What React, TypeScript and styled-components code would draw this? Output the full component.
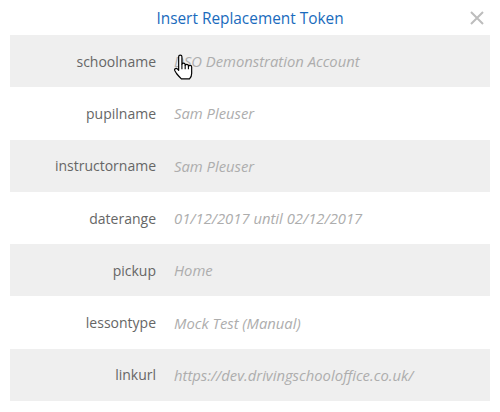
import React from "react";
import styled, { createGlobalStyle } from "styled-components";

const GlobalStyle = createGlobalStyle`
  html, body {
    margin: 0;
    padding: 0;
    background: #fff;
  }
  body {
    font-family: "Open Sans", "Liberation Sans", sans-serif;
  }
`;

const Dialog = styled.div`
  width: 500px;
  height: 412px;
  box-sizing: border-box;
  padding: 0 10px;
  background: #fff;
`;

const Header = styled.div`
  height: 35px;
  display: grid;
  grid-template-columns: 1fr auto 1fr;
  align-items: center;
`;

const Title = styled.h3`
  grid-column: 2;
  margin: 0;
  font-size: 15.4px;
  font-weight: 400;
  color: #1a6bbd;
  padding-top: 1px;
`;

const Close = styled.button`
  grid-column: 3;
  justify-self: end;
  margin-right: 6px;
  width: 14px;
  height: 14px;
  padding: 0;
  border: 0;
  background: none;
  cursor: pointer;
  display: flex;
`;

const Table = styled.div`
  display: flex;
  flex-direction: column;
`;

const Row = styled.div<{ $shaded: boolean }>`
  position: relative;
  height: 52.3px;
  display: grid;
  grid-template-columns: 146px 1fr;
  column-gap: 18px;
  align-items: center;
  background: ${(p) => (p.$shaded ? "#efefef" : "#fff")};
  font-size: 14px;
`;

const Label = styled.span`
  text-align: right;
  color: #666;
`;

const Value = styled.span`
  color: #adadad;
  font-style: italic;
  font-size: 14.8px;
`;

const Pointer = styled.svg`
  position: absolute;
  left: 163px;
  top: 19px;
  width: 20px;
  height: 26px;
`;

const tokens: [string, string][] = [
  ["schoolname", "DSO Demonstration Account"],
  ["pupilname", "Sam Pleuser"],
  ["instructorname", "Sam Pleuser"],
  ["daterange", "01/12/2017 until 02/12/2017"],
  ["pickup", "Home"],
  ["lessontype", "Mock Test (Manual)"],
  ["linkurl", "https://dev.drivingschooloffice.co.uk/"],
];

const HandCursor = () => (
  <Pointer viewBox="0 0 18 24">
    <path
      d="M5 13 L5 2.5 Q5 1 6.5 1 Q8 1 8 2.5 L8 9.5 Q8 8.5 9.5 8.5 Q11 8.5 11 10 L11 10.5 Q11 9.5 12.5 9.5 Q14 9.5 14 11 L14 11.5 Q14 10.5 15.5 10.5 Q17 10.5 17 12 L17 18 Q17 21 15 23 L7.5 23 Q5.5 21 3 18 L1.5 15.5 Q0.8 14 2 13.5 Q3 13 4 14 L5 15 Z"
      fill="#fff"
      stroke="#000"
      strokeWidth="1.1"
      strokeLinejoin="round"
    />
    <path d="M8 9.5 V14 M11 10.5 V14 M14 11.5 V14" stroke="#000" strokeWidth="1" />
  </Pointer>
);

const App: React.FC = () => {
  return (
    <>
      <GlobalStyle />
      <Dialog>
        <Header>
          <Title>Insert Replacement Token</Title>
          <Close aria-label="Close">
            <svg width="14" height="14" viewBox="0 0 14 14">
              <path d="M1 1 L13 13 M13 1 L1 13" stroke="#bdbdbd" strokeWidth="2" />
            </svg>
          </Close>
        </Header>
        <Table>
          {tokens.map(([name, value], i) => (
            <Row key={name} $shaded={i % 2 === 0}>
              <Label>{name}</Label>
              <Value>{value}</Value>
              {i === 0 && <HandCursor />}
            </Row>
          ))}
        </Table>
      </Dialog>
    </>
  );
};

export default App;
